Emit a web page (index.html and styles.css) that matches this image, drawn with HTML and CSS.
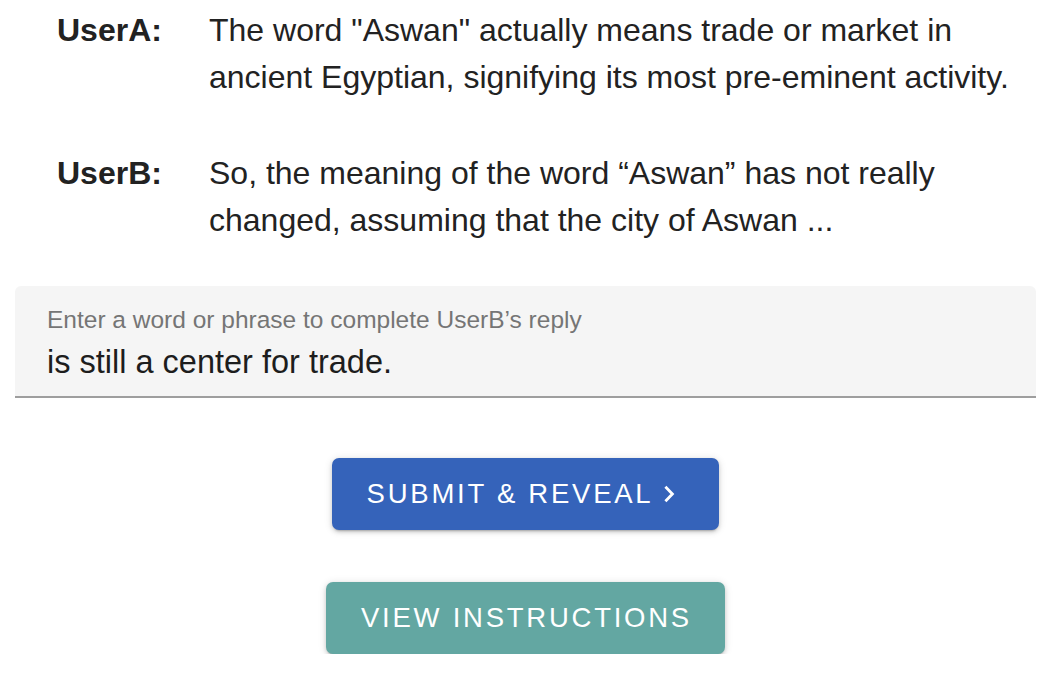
FILE: index.html
```html
<!DOCTYPE html>
<html>
<head>
<meta charset="utf-8">
<link rel="stylesheet" href="styles.css">
</head>
<body>
<div class="page">
  <div class="dialog">
    <div class="turn">
      <div class="who">UserA:</div>
      <div class="said">The word "Aswan" actually means trade or market in ancient Egyptian, signifying its most pre-eminent activity.</div>
    </div>
    <div class="turn">
      <div class="who">UserB:</div>
      <div class="said">So, the meaning of the word “Aswan” has not really changed, assuming that the city of Aswan ...</div>
    </div>
  </div>
  <div class="field">
    <div class="field-label">Enter a word or phrase to complete UserB’s reply</div>
    <div class="field-value">is still a center for trade.</div>
  </div>
  <div class="actions">
    <button class="btn btn-primary">SUBMIT &amp; REVEAL<svg class="chev" viewBox="0 0 24 24" width="24" height="24"><path d="M8.4 4.8 L15.4 12 L8.4 19.2" fill="none" stroke="#fff" stroke-width="2.8"/></svg></button>
    <button class="btn btn-secondary">VIEW INSTRUCTIONS</button>
  </div>
</div>
</body>
</html>
```
FILE: styles.css
```css
html, body {
  margin: 0;
  padding: 0;
  background: #fff;
}
.page {
  width: 1060px;
  font-family: "Liberation Sans", Arial, Helvetica, sans-serif;
  color: #222;
}
.dialog {
  padding: 7px 0 0 57px;
  display: flex;
  flex-direction: column;
  gap: 49px;
}
.turn {
  display: grid;
  grid-template-columns: 152px 812px;
  font-size: 32px;
  line-height: 47px;
}
.who {
  font-weight: bold;
}
.field {
  margin: 42px 24px 0 15px;
  background: #f5f5f5;
  border-radius: 6px 6px 0 0;
  border-bottom: 2px solid #9e9e9e;
  padding: 20px 32px 14px 32px;
}
.field-label {
  font-size: 24.5px;
  line-height: 28px;
  color: #757575;
}
.field-value {
  font-size: 32.5px;
  line-height: 40px;
  color: #1d1d1d;
  margin-top: 8px;
}
.actions {
  display: flex;
  flex-direction: column;
  align-items: center;
  gap: 52px;
  margin: 60px 24px 0 15px;
}
.btn {
  font-family: "Liberation Sans", Arial, Helvetica, sans-serif;
  font-size: 27.5px;
  letter-spacing: 2.75px;
  color: #fff;
  border: none;
  border-radius: 7px;
  height: 72px;
  display: flex;
  align-items: center;
  box-shadow: 0 3px 2px -2px rgba(0,0,0,0.2), 0 2px 4px 0 rgba(0,0,0,0.14), 0 1px 8px 0 rgba(0,0,0,0.12);
}
.btn-primary {
  background: #3563ba;
  padding: 0 38px 0 35px;
}
.btn-secondary {
  background: #63a7a2;
  padding: 0 33px 0 35px;
}
.chev {
  margin-left: 4px;
}
```
